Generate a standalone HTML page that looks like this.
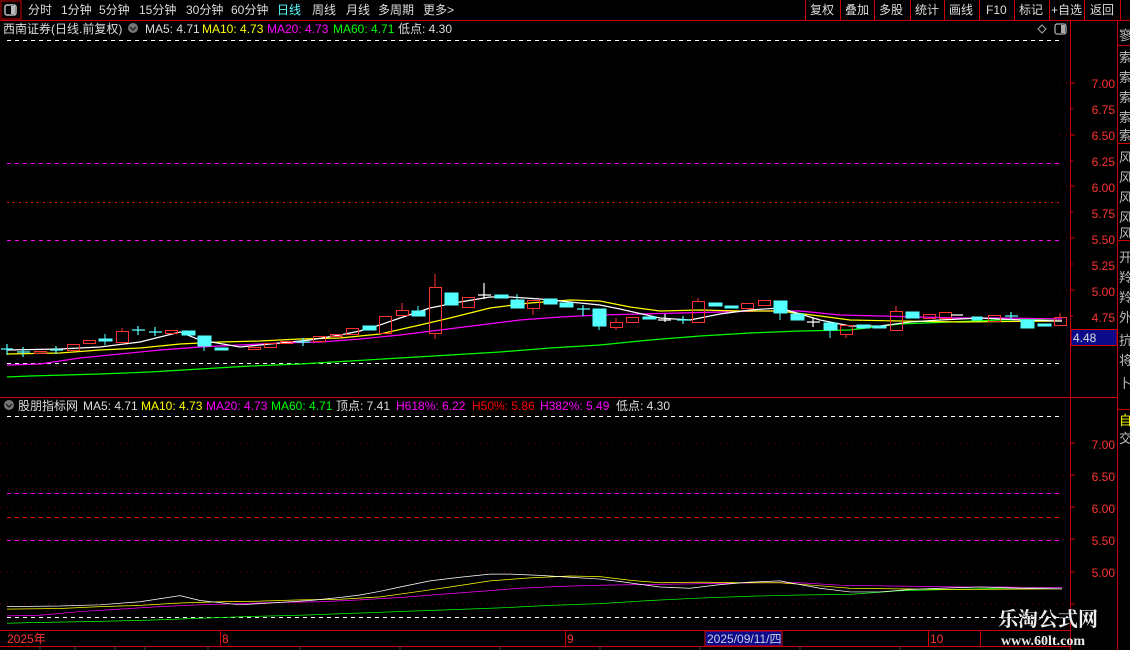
<!DOCTYPE html>
<html><head><meta charset="utf-8"><style>
html,body{margin:0;padding:0;background:#000;width:1130px;height:650px;overflow:hidden;font-family:"Liberation Sans","Noto Sans CJK SC",sans-serif;font-size:12px;}
</style></head><body>
<svg width="1130" height="650" style="position:absolute;left:0;top:0" xmlns="http://www.w3.org/2000/svg" font-family="Liberation Sans, Noto Sans CJK SC, sans-serif" font-size="12">
<rect x="1" y="1" width="20" height="18" fill="none" stroke="#c00"/>
<rect x="5" y="5" width="11" height="10" rx="2" fill="none" stroke="#bbb" stroke-width="1.5"/>
<rect x="11" y="6" width="4" height="8" fill="#bbb"/>
<line x1="0" y1="20.5" x2="1130" y2="20.5" stroke="#c00"/>
<g stroke="#c00">
<line x1="805.5" y1="0" x2="805.5" y2="20"/><line x1="840.5" y1="0" x2="840.5" y2="20"/><line x1="874.5" y1="0" x2="874.5" y2="20"/><line x1="910.5" y1="0" x2="910.5" y2="20"/><line x1="944.5" y1="0" x2="944.5" y2="20"/><line x1="979.5" y1="0" x2="979.5" y2="20"/><line x1="1014.5" y1="0" x2="1014.5" y2="20"/><line x1="1049.5" y1="0" x2="1049.5" y2="20"/><line x1="1084.5" y1="0" x2="1084.5" y2="20"/><line x1="1120.5" y1="0" x2="1120.5" y2="20"/>
</g>
<g fill="#ddd">
<text x="28" y="14">分时</text><text x="61" y="14">1分钟</text><text x="99" y="14">5分钟</text><text x="139" y="14">15分钟</text><text x="186" y="14">30分钟</text><text x="231" y="14">60分钟</text>
<text x="277" y="14" fill="#5ff">日线</text><text x="312" y="14">周线</text><text x="346" y="14">月线</text><text x="378" y="14">多周期</text><text x="423" y="14">更多&gt;</text>
<text x="810" y="14">复权</text><text x="845" y="14">叠加</text><text x="879" y="14">多股</text><text x="915" y="14">统计</text><text x="949" y="14">画线</text><text x="986" y="14">F10</text><text x="1019" y="14">标记</text><text x="1051" y="14">+自选</text><text x="1090" y="14">返回</text>
</g>
<line x1="1070.5" y1="20" x2="1070.5" y2="650" stroke="#c00"/>
<line x1="1117.5" y1="20" x2="1117.5" y2="650" stroke="#c00"/>
<line x1="0" y1="397.5" x2="1117" y2="397.5" stroke="#c00"/>
<line x1="0" y1="630.5" x2="1070" y2="630.5" stroke="#c00"/>
<line x1="0" y1="646.5" x2="1070" y2="646.5" stroke="#c00"/>
<g fill="#ddd">
<text x="3" y="33">西南证券(日线.前复权)</text>
<circle cx="133" cy="28" r="5" fill="#777"/><path d="M130 27 L133 30 L136 27" stroke="#222" fill="none" stroke-width="1.5"/>
<text x="145" y="33">MA5: 4.71</text><text x="202" y="33" fill="#ff0">MA10: 4.73</text><text x="267" y="33" fill="#f0f">MA20: 4.73</text><text x="333" y="33" fill="#0f0">MA60: 4.71</text><text x="398" y="33">低点: 4.30</text>
<path d="M1042 25 L1046 29 L1042 33 L1038 29 Z" fill="none" stroke="#aaa"/>
<rect x="1055" y="24" width="11" height="10" rx="2" fill="none" stroke="#aaa" stroke-width="1.3"/><rect x="1061" y="25" width="4" height="8" fill="#aaa"/>
<circle cx="9" cy="405" r="5" fill="#777"/><path d="M6 404 L9 407 L12 404" stroke="#222" fill="none" stroke-width="1.5"/>
<text x="18" y="410">股朋指标网</text><text x="83" y="410">MA5: 4.71</text><text x="141" y="410" fill="#ff0">MA10: 4.73</text><text x="206" y="410" fill="#f0f">MA20: 4.73</text><text x="271" y="410" fill="#0f0">MA60: 4.71</text><text x="336" y="410">顶点: 7.41</text><text x="396" y="410" fill="#f0f">H618%: 6.22</text><text x="472" y="410" fill="#f00">H50%: 5.86</text><text x="540" y="410" fill="#f0f">H382%: 5.49</text><text x="616" y="410">低点: 4.30</text>
</g>
<g stroke="#700" stroke-dasharray="1,5">
<line x1="1060" y1="83" x2="1068" y2="83"/><line x1="1060" y1="135" x2="1068" y2="135"/><line x1="1060" y1="186" x2="1068" y2="186"/><line x1="1060" y1="238" x2="1068" y2="238"/><line x1="1060" y1="290" x2="1068" y2="290"/><line x1="1060" y1="342" x2="1068" y2="342"/>
<line x1="0" y1="443" x2="1068" y2="443"/><line x1="0" y1="475" x2="1068" y2="475"/><line x1="0" y1="507" x2="1068" y2="507"/><line x1="0" y1="539" x2="1068" y2="539"/><line x1="0" y1="572" x2="1068" y2="572"/><line x1="0" y1="604" x2="1068" y2="604"/>
</g>
<g stroke-dasharray="4,4">
<line x1="7" y1="40.5" x2="1062" y2="40.5" stroke="#fff"/>
<line x1="7" y1="163.5" x2="1062" y2="163.5" stroke="#f0f"/>
<line x1="7" y1="202.5" x2="1062" y2="202.5" stroke="#e00" stroke-dasharray="2,4"/>
<line x1="7" y1="240.5" x2="1062" y2="240.5" stroke="#f0f"/>
<line x1="7" y1="363.5" x2="1062" y2="363.5" stroke="#fff"/>
<line x1="7" y1="416.5" x2="1062" y2="416.5" stroke="#fff"/>
<line x1="7" y1="493.5" x2="1062" y2="493.5" stroke="#f0f"/>
<line x1="7" y1="517.5" x2="1062" y2="517.5" stroke="#e00"/>
<line x1="7" y1="540.5" x2="1062" y2="540.5" stroke="#f0f"/>
<line x1="7" y1="617.5" x2="1062" y2="617.5" stroke="#fff"/>
</g>
<g fill="#f33" text-anchor="end">
<text x="1115" y="88">7.00</text><text x="1115" y="114">6.75</text><text x="1115" y="140">6.50</text><text x="1115" y="166">6.25</text><text x="1115" y="192">6.00</text><text x="1115" y="218">5.75</text><text x="1115" y="244">5.50</text><text x="1115" y="270">5.25</text><text x="1115" y="296">5.00</text><text x="1115" y="322">4.75</text>
<text x="1115" y="449">7.00</text><text x="1115" y="481">6.50</text><text x="1115" y="513">6.00</text><text x="1115" y="545">5.50</text><text x="1115" y="577">5.00</text>
</g>
<g stroke="#c00">
<line x1="1070" y1="83" x2="1075" y2="83"/><line x1="1070" y1="109" x2="1073" y2="109"/><line x1="1070" y1="135" x2="1075" y2="135"/><line x1="1070" y1="161" x2="1073" y2="161"/><line x1="1070" y1="186" x2="1075" y2="186"/><line x1="1070" y1="212" x2="1073" y2="212"/><line x1="1070" y1="238" x2="1075" y2="238"/><line x1="1070" y1="264" x2="1073" y2="264"/><line x1="1070" y1="290" x2="1075" y2="290"/><line x1="1070" y1="316" x2="1073" y2="316"/>
<line x1="1070" y1="443" x2="1075" y2="443"/><line x1="1070" y1="475" x2="1075" y2="475"/><line x1="1070" y1="507" x2="1075" y2="507"/><line x1="1070" y1="539" x2="1075" y2="539"/><line x1="1070" y1="572" x2="1075" y2="572"/><line x1="1070" y1="604" x2="1075" y2="604"/>
</g>
<rect x="1071" y="329.5" width="46" height="16" fill="#0a0a8a" stroke="#c00"/>
<text x="1073" y="342" fill="#ddd">4.48</text>
<g stroke="#c00"><line x1="1117" y1="45.5" x2="1130" y2="45.5"/><line x1="1117" y1="143.5" x2="1130" y2="143.5"/><line x1="1117" y1="240.5" x2="1130" y2="240.5"/><line x1="1117" y1="409.5" x2="1130" y2="409.5"/></g>
<g fill="#bbb" font-size="13">
<text x="1119" y="40">寥</text><text x="1119" y="62">索</text><text x="1119" y="82">索</text><text x="1119" y="102">索</text><text x="1119" y="122">索</text><text x="1119" y="140">索</text><text x="1119" y="162">风</text><text x="1119" y="182">风</text><text x="1119" y="202">风</text><text x="1119" y="222">风</text><text x="1119" y="238">风</text><text x="1119" y="262">开</text><text x="1119" y="282">羚</text><text x="1119" y="302">羚</text><text x="1119" y="322">外</text><text x="1119" y="345">抗</text><text x="1119" y="365">将</text><text x="1119" y="388">卜</text>
<text x="1119" y="425" fill="#ff0">自</text><text x="1119" y="443">交</text>
</g>
<g stroke="#c00"><line x1="220.5" y1="630" x2="220.5" y2="646"/><line x1="565.5" y1="630" x2="565.5" y2="646"/><line x1="928.5" y1="630" x2="928.5" y2="646"/>
<line x1="980.5" y1="630" x2="980.5" y2="646"/>
<g stroke="#444"><line x1="40" y1="646" x2="40" y2="650"/><line x1="75" y1="646" x2="75" y2="650"/><line x1="115" y1="646" x2="115" y2="650"/><line x1="145" y1="646" x2="145" y2="650"/><line x1="208" y1="646" x2="208" y2="650"/><line x1="300" y1="646" x2="300" y2="650"/><line x1="400" y1="646" x2="400" y2="650"/><line x1="500" y1="646" x2="500" y2="650"/><line x1="600" y1="646" x2="600" y2="650"/><line x1="700" y1="646" x2="700" y2="650"/><line x1="800" y1="646" x2="800" y2="650"/><line x1="900" y1="646" x2="900" y2="650"/></g>
</g>
<g fill="#f33"><text x="7" y="643">2025年</text><text x="222" y="643">8</text><text x="567" y="643">9</text><text x="930" y="643">10</text></g>
<rect x="705" y="631" width="77" height="15" fill="#0a0a8a" stroke="#c00"/>
<text x="707" y="643" fill="#ccd">2025/09/11/四</text>
<g id="ma" fill="none" stroke-width="1.2">
<polyline stroke="#0f0" points="7,377 30,376 100,374 150,372 200,369 250,366 300,364 350,361 400,358 450,355 500,352 550,348 600,345 650,340 700,336 750,333 800,331 850,330 900,324 950,322 1000,320 1062,319"/>
<polyline stroke="#f0f" points="7,365 40,364 80,358 120,354 160,350 200,347 240,345 280,343 320,342 360,339 400,335 440,330 480,325 520,320 560,317 600,315 640,314 680,313 720,312 760,311 800,311 840,315 880,316 920,317 960,318 1000,318 1062,319"/>
<polyline stroke="#ff0" points="7,354 60,353 100,350 140,348 180,344 220,342 260,341 300,339 340,338 380,334 420,325 450,318 490,308 530,303 570,300 600,301 630,307 660,311 700,310 740,311 780,311 820,316 850,320 900,321 960,322 1062,321"/>
<polyline stroke="#fff" points="7,350 60,349 100,347 140,342 180,332 200,340 240,347 280,343 310,340 340,335 360,331 380,325 400,318 430,308 460,302 490,297 510,297 540,299 570,302 600,305 620,309 660,318 690,320 720,314 750,310 780,308 800,314 820,320 850,326 880,326 910,322 940,320 980,318 1020,320 1062,321"/>
</g>
<g transform="translate(0,392.1) scale(1,0.613)"><use href="#ma" vector-effect="non-scaling-stroke"/></g>
<g stroke="#ff3232" fill="none">
<rect x="34.5" y="351.5" width="12" height="2"/><rect x="67.5" y="344.5" width="12" height="6"/><rect x="83.5" y="340.5" width="12" height="3"/><rect x="116.5" y="331.5" width="12" height="11"/><rect x="165.5" y="330.5" width="12" height="3"/>
<rect x="248.5" y="347.5" width="12" height="2"/><rect x="264.5" y="343.5" width="12" height="4"/><rect x="280.5" y="341.5" width="12" height="2"/><rect x="313.5" y="336.5" width="12" height="5"/><rect x="330.5" y="334.5" width="12" height="2"/><rect x="346.5" y="328.5" width="12" height="6"/><rect x="379.5" y="316.5" width="12" height="17"/><rect x="396.5" y="310.5" width="12" height="5"/><rect x="429.5" y="287.5" width="12" height="46"/><rect x="462.5" y="297.5" width="12" height="10"/><rect x="527.5" y="300.5" width="12" height="8"/>
<rect x="610.5" y="322.5" width="12" height="5"/><rect x="626.5" y="317.5" width="12" height="5"/><rect x="692.5" y="301.5" width="12" height="21"/><rect x="741.5" y="303.5" width="12" height="5"/><rect x="758.5" y="300.5" width="12" height="5"/><rect x="840.5" y="325.5" width="12" height="9"/><rect x="890.5" y="311.5" width="12" height="19"/><rect x="923.5" y="314.5" width="12" height="4"/><rect x="939.5" y="312.5" width="12" height="6"/><rect x="988.5" y="315.5" width="12" height="6"/><rect x="1054.5" y="317.5" width="12" height="8"/>
<line x1="122" y1="328" x2="122" y2="331"/><line x1="402" y1="303" x2="402" y2="310"/><line x1="435" y1="274" x2="435" y2="287"/><line x1="435" y1="334" x2="435" y2="339"/><line x1="533" y1="309" x2="533" y2="315"/><line x1="616" y1="318" x2="616" y2="322"/><line x1="616" y1="328" x2="616" y2="330"/><line x1="698" y1="298" x2="698" y2="301"/><line x1="846" y1="335" x2="846" y2="338"/><line x1="896" y1="306" x2="896" y2="311"/><line x1="1060" y1="313" x2="1060" y2="317"/>
</g>
<g fill="#54ffff" stroke="#54ffff">
<rect x="99" y="339" width="13" height="2"/><rect x="182" y="331" width="13" height="4"/><rect x="198" y="336" width="13" height="10"/><rect x="215" y="348" width="13" height="2"/><rect x="363" y="326" width="13" height="4"/><rect x="412" y="311" width="13" height="5"/><rect x="445" y="293" width="13" height="12"/><rect x="495" y="295" width="13" height="3"/><rect x="511" y="300" width="13" height="8"/><rect x="544" y="299" width="13" height="5"/><rect x="560" y="303" width="13" height="4"/><rect x="593" y="309" width="13" height="17"/><rect x="643" y="317" width="13" height="2"/><rect x="709" y="303" width="13" height="3"/><rect x="725" y="306" width="13" height="2"/><rect x="774" y="301" width="13" height="12"/><rect x="791" y="314" width="13" height="6"/><rect x="824" y="323" width="13" height="7"/><rect x="857" y="325" width="13" height="3"/><rect x="873" y="326" width="13" height="2"/><rect x="906" y="312" width="13" height="6"/><rect x="972" y="317" width="10" height="3"/><rect x="1021" y="320" width="13" height="8"/><rect x="1038" y="324" width="13" height="2"/>
<line x1="105" y1="334" x2="105" y2="345"/><line x1="204" y1="346" x2="204" y2="351"/><line x1="418" y1="306" x2="418" y2="311"/><line x1="517" y1="294" x2="517" y2="300"/><line x1="599" y1="326" x2="599" y2="330"/><line x1="780" y1="313" x2="780" y2="320"/><line x1="830" y1="330" x2="830" y2="338"/>
<path d="M1 349 H13 M7 344 V355 M17 352 H30 M23 347 V357 M50 350 H63 M56 346 V354 M132 330 H145 M138 326 V335 M149 332 H162 M155 327 V336 M296 342 H310 M303 338 V346 M577 309 H590 M583 305 V316 M677 320 H690 M683 316 V324 M1005 316 H1018 M1011 312 V320" fill="none" stroke-width="1.2"/>
</g>
<g stroke="#fff" fill="none" stroke-width="1.2"><path d="M478 295 H491 M484 283 V299 M658 320 H671 M665 314 V322 M807 322 H820 M813 318 V327 M951 315 H963"/></g>
<text x="998" y="626" fill="#eee" font-family="Noto Serif CJK SC, serif" font-weight="bold" font-size="20">乐淘公式网</text>
<text x="1001" y="645" fill="#eee" font-family="Liberation Serif, serif" font-weight="bold" font-size="14">www.60lt.com</text>
</svg>
</body></html>
